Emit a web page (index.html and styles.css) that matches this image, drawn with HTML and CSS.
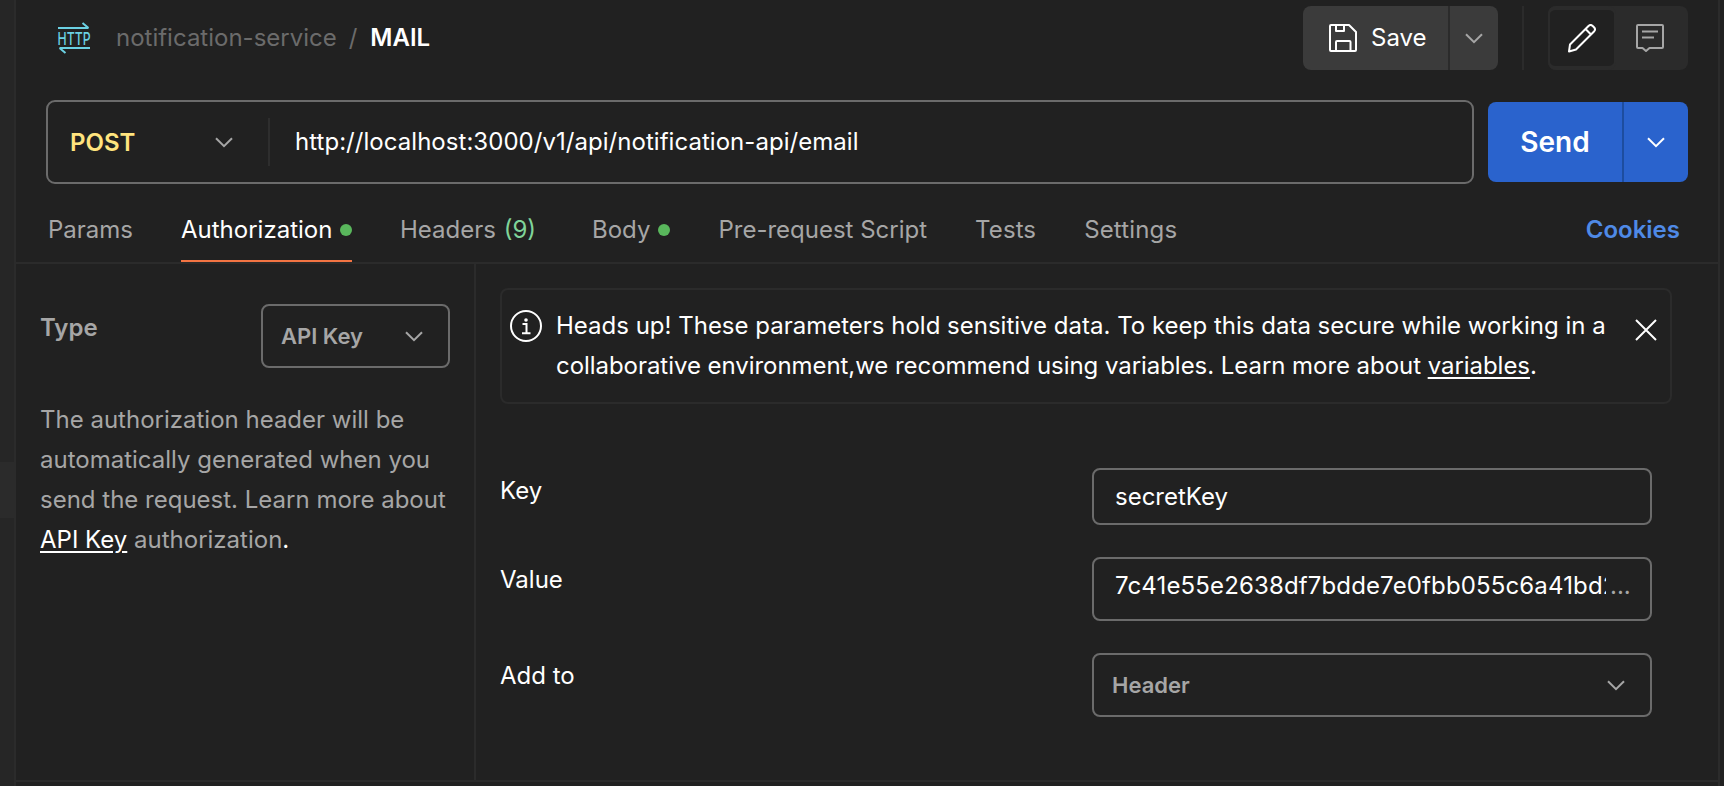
FILE: index.html
```
<!DOCTYPE html>
<html lang="en">
<head>
<meta charset="utf-8">
<title>MAIL - notification-service</title>
<link rel="stylesheet" href="styles.css">
</head>
<body>
<svg class="defs" width="0" height="0"><symbol id="chevron" viewBox="0 0 18 11"><path d="M1 1.200l8 8 8-8" fill="none" stroke="currentColor" stroke-width="2"/></symbol></svg>
<div class="app">
  <aside class="rail"><div class="rail-handle"></div></aside>
  <main class="request">
    <header class="topbar">
      <svg class="http-icon" viewBox="0 0 32 32" fill="none" stroke="currentColor" stroke-width="2">
        <path d="M0 6h30.500M24.500 1l6 5M32 26H1.500M7.500 31l-6-5"/>
        <text class="http-text" x="-.5" y="22.800" textLength="33" lengthAdjust="spacingAndGlyphs">HTTP</text>
      </svg>
      <nav class="crumbs"><span>notification-service</span><span class="slash">/</span><strong>MAIL</strong></nav>
      <div class="save-group">
        <button class="save">
          <svg width="28" height="28" viewBox="0 0 28 28" fill="none" stroke="currentColor" stroke-width="2" stroke-linejoin="round"><path d="M2 1H20l7 7v18a1 1 0 0 1-1 1H2a1 1 0 0 1-1-1V2a1 1 0 0 1 1-1zM7 1v6h8V1M7 27V18a1 1 0 0 1 1-1h12.500a1 1 0 0 1 1 1V27"/></svg>
          <span>Save</span>
        </button>
        <button class="save-more"><svg class="chev"><use href="#chevron"/></svg></button>
      </div>
      <div class="rule"></div>
      <div class="toggle">
        <button class="mode active"><svg width="28" height="29" viewBox="0 0 28 29" fill="none" stroke="currentColor" stroke-width="2" stroke-linejoin="round"><path d="M1 27.500l1-7L20.500 2a3 3 0 0 1 4.200 0l1.300 1.300a3 3 0 0 1 0 4.200L8 25.500zM17.500 5l5.500 5.500"/></svg></button>
        <button class="mode notes"><svg width="28" height="28" viewBox="0 0 28 28" fill="none" stroke="currentColor" stroke-width="2" stroke-linejoin="round"><path d="M2 1h24a1 1 0 0 1 1 1v21a1 1 0 0 1-1 1H13.500L10 27l-3.500-3H2a1 1 0 0 1-1-1V2a1 1 0 0 1 1-1zM6 7.500h16M6 13.500h12"/></svg></button>
      </div>
    </header>

    <section class="urlbar">
      <div class="url-box">
        <button class="method"><span>POST</span><svg class="chev"><use href="#chevron"/></svg></button>
        <div class="url">http://localhost:3000/v1/api/notification-api/email</div>
      </div>
      <div class="send-group">
        <button class="send">Send</button>
        <button class="send-more"><svg class="chev"><use href="#chevron"/></svg></button>
      </div>
    </section>

    <nav class="tabs">
      <a class="tab params">Params</a>
      <a class="tab auth active">Authorization<i class="dot"></i></a>
      <a class="tab headers">Headers <span class="count">(9)</span></a>
      <a class="tab body-tab">Body<i class="dot"></i></a>
      <a class="tab pre">Pre-request Script</a>
      <a class="tab tests">Tests</a>
      <a class="tab settings">Settings</a>
      <a class="cookies">Cookies</a>
    </nav>

    <section class="content">
      <div class="auth-side">
        <div class="type-row">
          <span class="type-label">Type</span>
          <button class="select type-select"><span>API Key</span><svg class="chev"><use href="#chevron"/></svg></button>
        </div>
        <p class="hint">The authorization header will be<br>automatically generated when you<br>send the request. Learn more about<br><a>API Key</a> authorization<b>.</b></p>
      </div>
      <div class="auth-main">
        <div class="banner">
          <svg class="info" viewBox="0 0 32 32" fill="none" stroke="currentColor" stroke-width="2"><circle cx="16" cy="16" r="15"/><path d="M12.500 14H16.500v9M12 23.200h8.500"/><circle cx="16" cy="10" r="1.800" fill="currentColor" stroke="none"/></svg>
          <p class="banner-text">Heads up! These parameters hold sensitive data. To keep this data secure while working in a<br><span class="line-two">collaborative environment,we recommend using variables. Learn more about <a>variables</a>.</span></p>
          <svg class="close" viewBox="0 0 22 22" fill="none" stroke="currentColor" stroke-width="2"><path d="M1 1l20 20M21 1L1 21"/></svg>
        </div>
        <div class="fields">
          <div class="field"><label>Key</label><div class="input key-input">secretKey</div></div>
          <div class="field"><label>Value</label><div class="input value-input"><span class="secret">7c41e55e2638df7bdde7e0fbb055c6a41bd2</span><span class="more">...</span></div></div>
          <div class="field"><label>Add to</label><button class="select place-select"><span>Header</span><svg class="chev"><use href="#chevron"/></svg></button></div>
        </div>
      </div>
    </section>
  </main>
</div>
</body>
</html>
```
FILE: styles.css
```
* { box-sizing: border-box; }
body { margin: 0; background: #212121; color: #fff; font: 24px/40px Inter, "Liberation Sans", sans-serif; overflow: hidden; }
button { font: inherit; color: inherit; border: 0; padding: 0; margin: 0; background: none; display: flex; align-items: center; }
p { margin: 0; }
svg { display: block; flex: none; }
.defs { position: absolute; }
.chev { width: 18px; height: 11px; color: #a6a6a6; }

.app { display: flex; width: 1724px; height: 786px; }
.rail { width: 16px; background: #262626; border-right: 2px solid #2b2b2b; padding-top: 462px; }
.rail-handle { height: 56px; background: #2b2b2b; }
.request { width: 1704px; border-right: 2px solid #2b2b2b; display: flex; flex-direction: column; }

.topbar { height: 100px; padding: 6px 30px 0 42px; display: flex; align-items: flex-start; }
.http-icon { width: 32px; height: 32px; margin-top: 16px; color: #6bd1e3; overflow: visible; }
.http-text { font-size: 17.5px; font-weight: 500; fill: currentColor; stroke: none; }
.crumbs { display: flex; margin: 12px auto 0 26px; color: #6b6b6b; white-space: nowrap; }
.slash { margin: 0 13px 0 12px; }
.crumbs strong { color: #fff; font-weight: 600; }
.save-group { display: flex; width: 195px; height: 64px; background: #3b3b3b; border-radius: 8px; }
.save { width: 147px; padding-left: 26px; gap: 14px; border-right: 2px solid #2b2b2b; }
.save-more { width: 48px; justify-content: center; }
.rule { width: 2px; height: 64px; margin: 0 24px; background: #2b2b2b; }
.toggle { display: flex; width: 140px; height: 64px; background: #2b2b2b; border-radius: 8px; }
.mode { flex: 1; justify-content: center; color: #a6a6a6; }
.mode.active { flex: none; width: 68px; color: #fff; background: #212121; border: 2px solid #2b2b2b; border-top-width: 4px; border-bottom-width: 4px; border-radius: 8px; }
.mode.notes { padding-right: 4px; }

.urlbar { display: flex; align-items: center; gap: 14px; padding: 0 30px; height: 84px; }
.url-box { width: 1428px; height: 84px; border: 2px solid #6b6b6b; border-radius: 9px; display: flex; align-items: center; }
.method { width: 222px; height: 48px; border-right: 2px solid #2e2e2e; padding: 0 35px 0 22px; justify-content: space-between; color: #ffe47e; font-weight: 600; }
.method span { padding-top: 2px; }
.url { padding-left: 25px; letter-spacing: .04px; }
.send-group { display: flex; width: 200px; height: 80px; background: #2a63cd; border-radius: 8px; }
.send { width: 136px; justify-content: center; border-right: 2px solid #1d4d9f; font-size: 28px; font-weight: 600; }
.send-more { flex: 1; justify-content: center; }
.send-more .chev { color: #fff; }

.tabs { display: flex; height: 80px; border-bottom: 2px solid #2b2b2b; padding: 0 38px 0 32px; color: #a6a6a6; white-space: nowrap; }
.tab, .cookies { height: 78px; padding-top: 26px; margin-right: 48px; }
.auth, .body-tab { display: flex; align-items: center; gap: 8px; padding-top: 14px; }
.auth { width: 171px; color: #fff; border-bottom: 2px solid #f37443; padding-top: 16px; }
.dot { width: 12px; height: 12px; flex: none; border-radius: 50%; background: #59b75c; }
.headers { width: 145px; word-spacing: 1px; }
.body-tab { margin-left: -1px; }
.count { color: #80d49a; }
.tests { letter-spacing: .1px; }
.settings { letter-spacing: .15px; }
.cookies { margin: 0 0 0 auto; color: #4f8ae6; font-weight: 600; }

.content { display: flex; height: 518px; border-bottom: 2px solid #2b2b2b; }
.auth-side { width: 460px; border-right: 2px solid #2b2b2b; padding: 40px 24px 0 24px; color: #a6a6a6; }
.type-row { display: flex; justify-content: space-between; height: 64px; }
.type-label { font-weight: 600; padding-top: 4px; }
.select { height: 64px; border: 2px solid #6b6b6b; border-radius: 8px; justify-content: space-between; color: #a6a6a6; font-size: 22px; font-weight: 600; }
.type-select { width: 189px; padding: 0 25px 0 18px; }
.hint { margin-top: 32px; white-space: nowrap; }
.hint a { color: #fff; text-decoration: underline; text-decoration-thickness: 2px; text-underline-offset: 3px; }
.hint b { color: #fff; font-weight: 400; }
.auth-main { flex: 1; padding: 24px 0 0 24px; }
.banner { display: flex; width: 1172px; height: 116px; border: 2px solid #2b2b2b; border-radius: 8px; padding-top: 16px; }
.info { width: 32px; height: 32px; margin: 4px 14px 0 8px; }
.banner-text { width: 1057px; white-space: nowrap; }
.line-two { letter-spacing: -.05px; }
.banner-text a { text-decoration: underline; text-decoration-thickness: 2px; text-underline-offset: 3px; }
.close { width: 22px; height: 22px; margin: 13px 0 0 22px; }
.fields { margin-top: 64px; width: 1152px; display: grid; gap: 32px; }
.field { display: flex; justify-content: space-between; }
.field label { padding-top: 3px; }
.input { width: 560px; border: 2px solid #6b6b6b; border-radius: 8px; padding: 7px 0 0 21px; display: flex; }
.key-input { height: 57px; }
.value-input { height: 64px; }
.secret { width: 491px; overflow: hidden; letter-spacing: .14px; }
.more { color: #a6a6a6; padding-left: 4px; }
.place-select { width: 560px; padding: 0 25px 0 18px; }
```
